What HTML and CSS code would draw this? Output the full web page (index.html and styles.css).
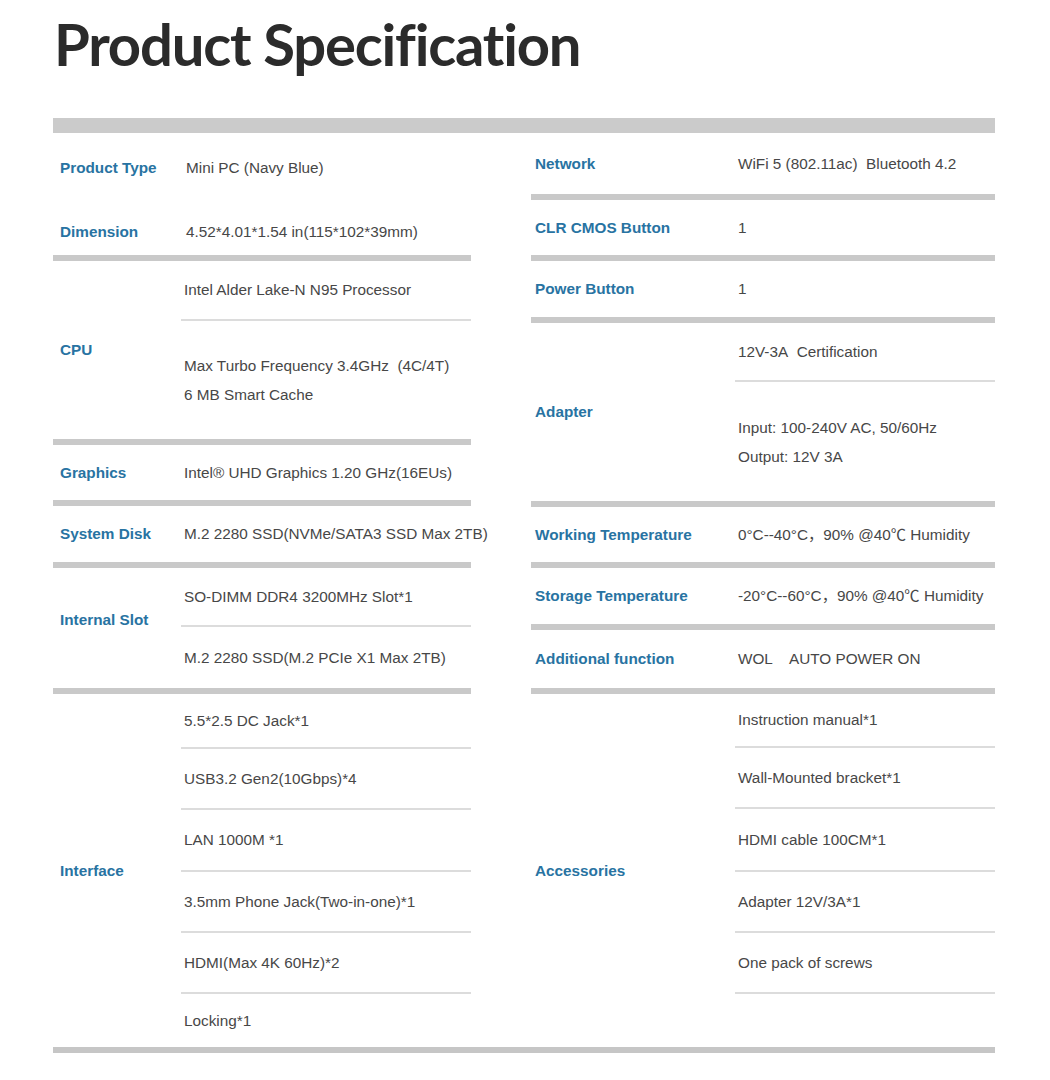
FILE: index.html
```html
<!DOCTYPE html>
<html lang="en">
<head>
<meta charset="utf-8">
<title>Product Specification</title>
<link rel="stylesheet" href="styles.css">
</head>
<body>
<div class="page">
  <h1 class="title">Product Specification</h1>
  <div class="topbar"></div>
  <div class="cols">
    <div class="col left">
      <div class="grp pair">
        <div class="prow"><span class="lab">Product Type</span><span class="pval">Mini PC (Navy Blue)</span></div>
        <div class="prow"><span class="lab">Dimension</span><span class="pval">4.52*4.01*1.54 in(115*102*39mm)</span></div>
      </div>
      <div class="bar"></div>
      <div class="grp">
        <div class="lab">CPU</div>
        <div class="vals">
          <div class="cell h58">Intel Alder Lake-N N95 Processor</div>
          <div class="rule"></div>
          <div class="cell h118 multi"><span>Max Turbo Frequency 3.4GHz&nbsp; (4C/4T)</span><span>6 MB Smart Cache</span></div>
        </div>
      </div>
      <div class="bar"></div>
      <div class="grp">
        <div class="lab">Graphics</div>
        <div class="vals"><div class="cell h55">Intel® UHD Graphics 1.20 GHz(16EUs)</div></div>
      </div>
      <div class="bar"></div>
      <div class="grp">
        <div class="lab">System Disk</div>
        <div class="vals"><div class="cell h56">M.2 2280 SSD(NVMe/SATA3 SSD Max 2TB)</div></div>
      </div>
      <div class="bar"></div>
      <div class="grp">
        <div class="lab up8">Internal Slot</div>
        <div class="vals">
          <div class="cell h57">SO-DIMM DDR4 3200MHz Slot*1</div>
          <div class="rule"></div>
          <div class="cell h61">M.2 2280 SSD(M.2 PCIe X1 Max 2TB)</div>
        </div>
      </div>
      <div class="bar"></div>
      <div class="grp">
        <div class="lab">Interface</div>
        <div class="vals">
          <div class="cell h53">5.5*2.5 DC Jack*1</div>
          <div class="rule"></div>
          <div class="cell h59">USB3.2 Gen2(10Gbps)*4</div>
          <div class="rule"></div>
          <div class="cell h60">LAN 1000M *1</div>
          <div class="rule"></div>
          <div class="cell h59">3.5mm Phone Jack(Two-in-one)*1</div>
          <div class="rule"></div>
          <div class="cell h59">HDMI(Max 4K 60Hz)*2</div>
          <div class="rule"></div>
          <div class="cell h53">Locking*1</div>
        </div>
      </div>
    </div>
    <div class="col right">
      <div class="grp">
        <div class="lab">Network</div>
        <div class="vals"><div class="cell h61">WiFi 5 (802.11ac)&nbsp; Bluetooth 4.2</div></div>
      </div>
      <div class="bar"></div>
      <div class="grp">
        <div class="lab">CLR CMOS Button</div>
        <div class="vals"><div class="cell h55">1</div></div>
      </div>
      <div class="bar"></div>
      <div class="grp">
        <div class="lab">Power Button</div>
        <div class="vals"><div class="cell h56">1</div></div>
      </div>
      <div class="bar"></div>
      <div class="grp">
        <div class="lab">Adapter</div>
        <div class="vals">
          <div class="cell h57">12V-3A&nbsp; Certification</div>
          <div class="rule"></div>
          <div class="cell h119 multi"><span>Input: 100-240V AC, 50/60Hz</span><span>Output: 12V 3A</span></div>
        </div>
      </div>
      <div class="bar"></div>
      <div class="grp">
        <div class="lab">Working Temperature</div>
        <div class="vals"><div class="cell h55">0°C--40°C，90% @40℃ Humidity</div></div>
      </div>
      <div class="bar"></div>
      <div class="grp">
        <div class="lab">Storage Temperature</div>
        <div class="vals"><div class="cell h56">-20°C--60°C，90% @40℃ Humidity</div></div>
      </div>
      <div class="bar"></div>
      <div class="grp">
        <div class="lab">Additional function</div>
        <div class="vals"><div class="cell h58">WOL&nbsp;&nbsp;&nbsp; AUTO POWER ON</div></div>
      </div>
      <div class="bar"></div>
      <div class="grp">
        <div class="lab">Accessories</div>
        <div class="vals">
          <div class="cell h52">Instruction manual*1</div>
          <div class="rule"></div>
          <div class="cell h59">Wall-Mounted bracket*1</div>
          <div class="rule"></div>
          <div class="cell h61">HDMI cable 100CM*1</div>
          <div class="rule"></div>
          <div class="cell h59">Adapter 12V/3A*1</div>
          <div class="rule"></div>
          <div class="cell h59">One pack of screws</div>
          <div class="rule"></div>
          <div class="cell h53"></div>
        </div>
      </div>
    </div>
  </div>
  <div class="bottombar"></div>
</div>
</body>
</html>
```

FILE: styles.css
```css
* { box-sizing: border-box; }
html, body { margin: 0; padding: 0; background: #ffffff; }
body {
  font-family: "Liberation Sans", Arial, "Noto Sans CJK SC", sans-serif;
  font-size: 15.3px;
  color: #474747;
}
.page {
  width: 1050px;
  padding-left: 53px;
}
.title {
  margin: 0;
  height: 118px;
  padding: 11px 0 0 1px;
  font-family: "Lato", "Noto Sans", sans-serif;
  font-weight: 700;
  font-size: 58px;
  line-height: 66px;
  letter-spacing: -1.2px;
  font-variant-ligatures: none;
  color: #2b2b2b;
}
.topbar {
  width: 942px;
  height: 15px;
  background: #cbcbcb;
}
.bottombar {
  width: 942px;
  height: 6px;
  background: #c6c6c6;
}
.cols {
  display: flex;
  width: 942px;
  justify-content: space-between;
}
.col {
  display: flex;
  flex-direction: column;
}
.col.left { width: 418px; }
.col.right { width: 464px; }
.bar {
  height: 6px;
  background: #c9c9c9;
}
.grp {
  display: flex;
}
.lab {
  flex-shrink: 0;
  display: flex;
  align-items: center;
  font-weight: 700;
  color: #2873a2;
  white-space: nowrap;
}
.left .lab { width: 128px; padding-left: 7px; }
.right .lab { width: 204px; padding-left: 4px; }
.lab.up8 { padding-bottom: 16px; }
.vals {
  flex: 1;
  min-width: 0;
  display: flex;
  flex-direction: column;
}
.cell {
  display: flex;
  flex-direction: column;
  justify-content: center;
  padding-left: 3px;
  line-height: 22px;
  white-space: nowrap;
}
.cell.multi { line-height: 29px; }
.rule {
  height: 2px;
  background: #dcdcdc;
}
.h52 { height: 52px; }
.h53 { height: 53px; }
.h55 { height: 55px; }
.h56 { height: 56px; }
.h57 { height: 57px; }
.h58 { height: 58px; }
.h59 { height: 59px; }
.h60 { height: 60px; }
.h61 { height: 61px; }
.h118 { height: 118px; }
.h119 { height: 119px; }
.pair {
  height: 122px;
  flex-direction: column;
  padding-top: 24px;
  gap: 42px;
}
.prow {
  display: flex;
  line-height: 22px;
}
.pval { padding-left: 5px; white-space: nowrap; }
```
